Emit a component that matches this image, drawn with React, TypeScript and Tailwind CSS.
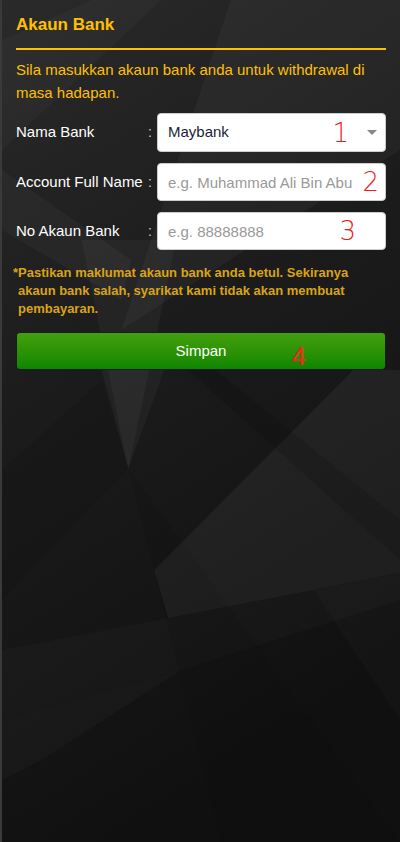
import { useState } from 'react';

const BANKS = ['Maybank', 'CIMB Bank', 'Public Bank', 'RHB Bank', 'Hong Leong Bank'];

export default function App() {
    const [bank, setBank] = useState('Maybank');

    return (
        <div className="relative min-h-[842px] w-full overflow-hidden border-l-2 border-[#3a3a3a] bg-[#141414] font-['Liberation_Sans',Arial,sans-serif]">
            <Backdrop />

            <div className="relative pr-[14px] pl-[14px]">
                <div className="border-b-2 border-[#ffc000] pt-[15px] pb-[13px]">
                    <h1 className="text-[17px] leading-[20px] font-bold text-[#ffc000]">Akaun Bank</h1>
                </div>

                <p className="mt-2 text-[15px] leading-[23px] text-[#ffc000]">
                    Sila masukkan akaun bank anda untuk withdrawal di masa hadapan.
                </p>

                <div className="mt-[9px] flex flex-col gap-[11px]">
                    <FormRow label="Nama Bank">
                        <div className="relative h-[39px] w-full">
                            <select
                                value={bank}
                                onChange={(e) => setBank(e.target.value)}
                                className="h-full w-full appearance-none rounded-[4px] border border-[#ccc] bg-white pl-[10px] text-[15px] text-[#1b1b3a] outline-none"
                            >
                                {BANKS.map((b) => (
                                    <option key={b}>{b}</option>
                                ))}
                            </select>
                            <span className="pointer-events-none absolute top-[17px] right-[9px] h-0 w-0 border-x-[5px] border-t-[5px] border-x-transparent border-t-[#888]" />
                            <Marker className="top-[4px] right-[37px]">1</Marker>
                        </div>
                    </FormRow>

                    <FormRow label="Account Full Name">
                        <div className="relative h-[38px] w-full">
                            <input
                                placeholder="e.g. Muhammad Ali Bin Abu"
                                className="h-full w-full rounded-[4px] border border-[#ccc] bg-white pl-[10px] text-[15px] text-[#222] outline-none placeholder:text-[#999]"
                            />
                            <Marker className="top-[3px] right-[7px]">2</Marker>
                        </div>
                    </FormRow>

                    <FormRow label="No Akaun Bank">
                        <div className="relative h-[38px] w-full">
                            <input
                                placeholder="e.g. 88888888"
                                className="h-full w-full rounded-[4px] border border-[#ccc] bg-white pl-[10px] text-[15px] text-[#222] outline-none placeholder:text-[#999]"
                            />
                            <Marker className="top-[3px] right-[30px]">3</Marker>
                        </div>
                    </FormRow>
                </div>

                <p className="mt-[14px] pl-[2px] -indent-[5px] text-[13px] leading-[18px] font-bold text-[#d9a316]">
                    *Pastikan maklumat akaun bank anda betul. Sekiranya akaun bank salah, syarikat kami tidak akan membuat
                    pembayaran.
                </p>

                <div className="relative mt-[14px] rounded-[4px] border border-[#1c1c1c]">
                    <button className="h-[36px] w-full rounded-[3px] bg-gradient-to-b from-[#42a00e] to-[#0a8600] text-[15px] text-white">
                        Simpan
                    </button>
                    <span className="pointer-events-none absolute top-[9px] left-[275px] text-[25px] leading-[28px] font-light text-[#ff2020]">
                        4
                    </span>
                </div>
            </div>
        </div>
    );
}

function FormRow({ label, children }: { label: string; children: React.ReactNode }) {
    return (
        <div className="flex items-center">
            <span className="w-[132px] shrink-0 text-[15px] text-white">{label}</span>
            <span className="w-[9px] shrink-0 text-[14px] text-[#ccc]">:</span>
            {children}
        </div>
    );
}

function Marker({ className, children }: { className: string; children: React.ReactNode }) {
    return (
        <span
            className={`pointer-events-none absolute text-[26px] leading-[32px] text-[#ee1c1c] font-['DejaVu_Sans',sans-serif] font-extralight ${className}`}
        >
            {children}
        </span>
    );
}

// abstract shards behind the form
function Backdrop() {
    return (
        <svg className="absolute inset-0 h-full w-full" viewBox="0 0 400 842" preserveAspectRatio="none">
            <defs>
                <linearGradient id="base" x1="0" y1="0" x2="0.3" y2="1">
                    <stop offset="0" stopColor="#2a2a2a" />
                    <stop offset="0.45" stopColor="#1c1c1c" />
                    <stop offset="1" stopColor="#101010" />
                </linearGradient>
            </defs>
            <rect width="400" height="842" fill="url(#base)" />
            <polygon points="230,0 400,0 400,150 120,330" fill="#fff" opacity="0.035" />
            <polygon points="0,40 90,0 160,0 0,150" fill="#fff" opacity="0.025" />
            <polygon points="0,170 130,260 120,300 0,230" fill="#fff" opacity="0.03" />
            <polygon points="80,240 175,240 127,470" fill="#fff" opacity="0.035" />
            <polygon points="100,370 163,370 127,468" fill="#fff" opacity="0.04" />
            <polygon points="353,370 400,370 400,573 313,590 167,618 153,570" fill="#fff" opacity="0.05" />
            <polygon points="187,370 215,370 400,520 400,560" fill="#000" opacity="0.12" />
            <polygon points="0,470 100,380 127,468 0,600" fill="#000" opacity="0.08" />
            <polygon points="0,650 167,618 313,590 400,573 400,600 180,670 0,720" fill="#fff" opacity="0.02" />
            <polygon points="0,720 180,670 40,760 0,780" fill="#fff" opacity="0.025" />
            <polygon points="127,468 400,842 220,842 160,600" fill="#000" opacity="0.05" />
            <polygon points="313,590 400,573 400,720" fill="#fff" opacity="0.02" />
        </svg>
    );
}
